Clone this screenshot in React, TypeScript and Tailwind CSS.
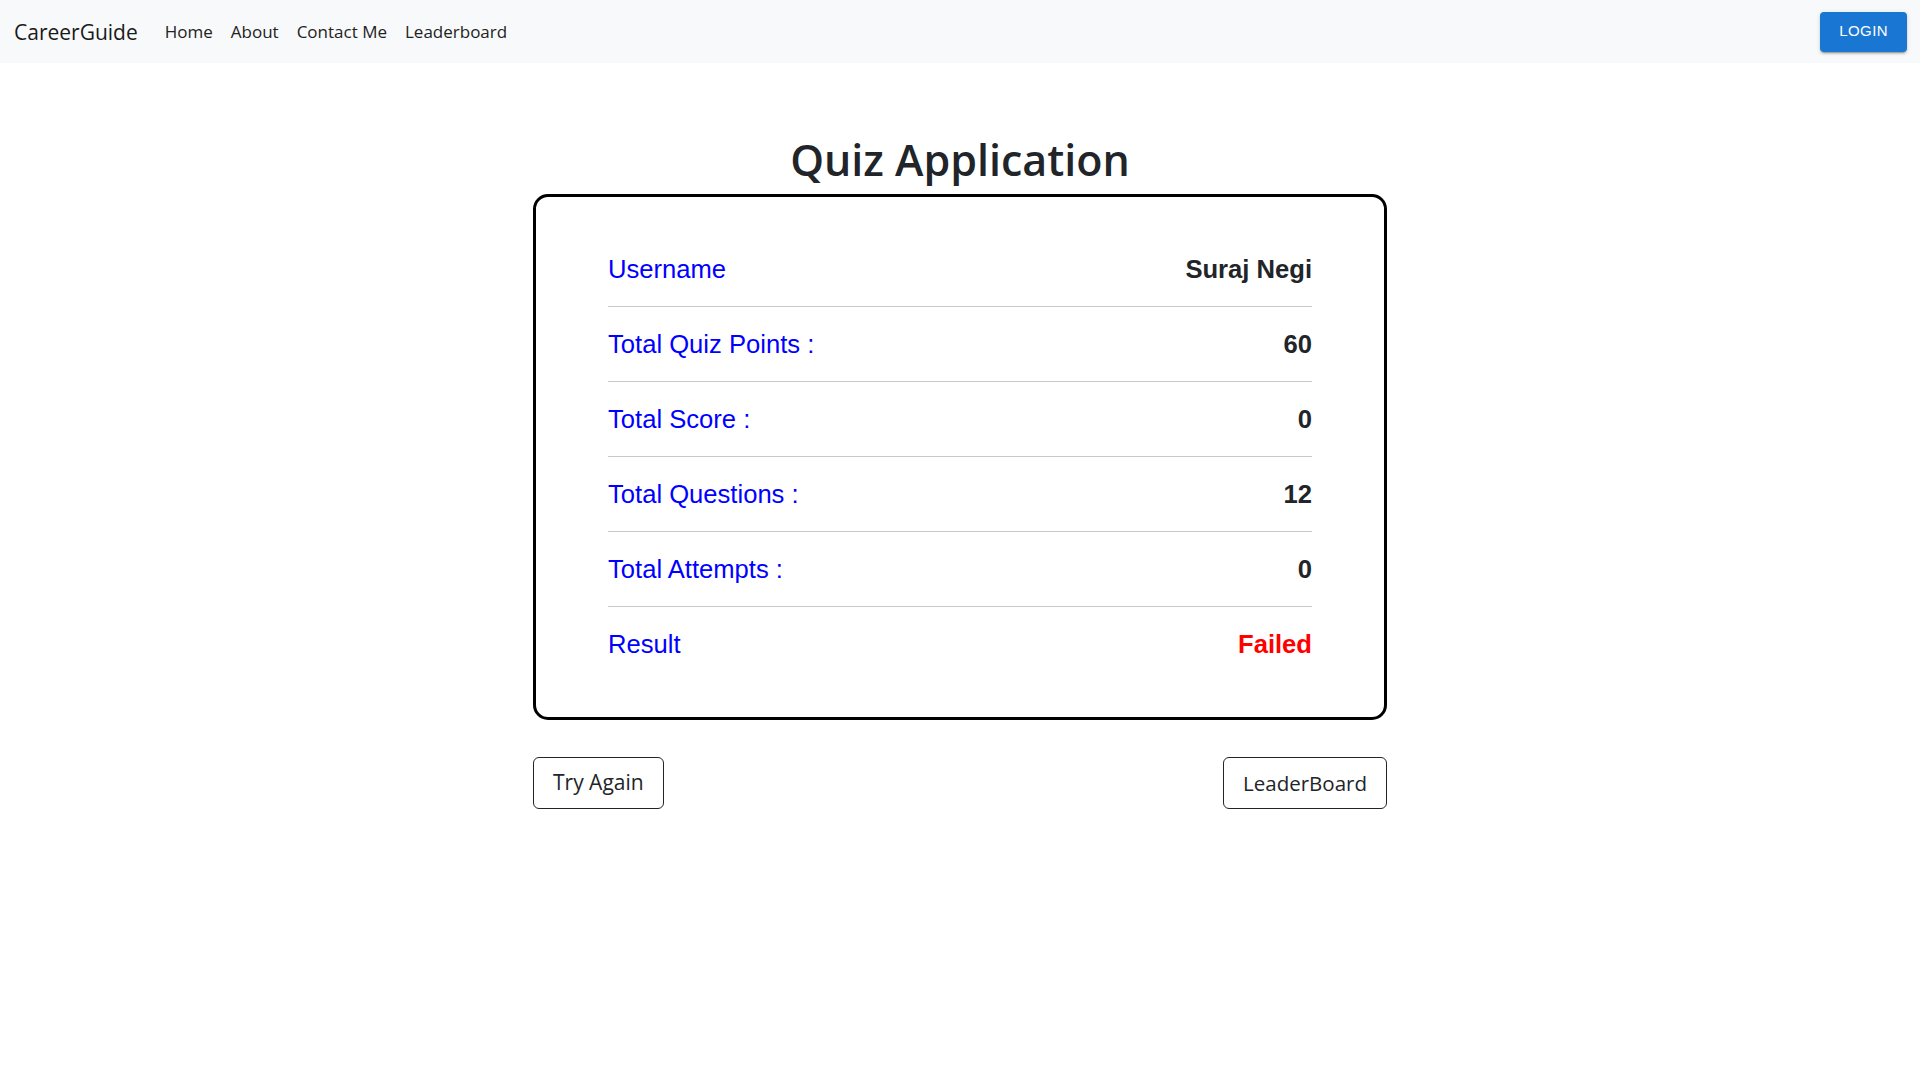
import React from 'react';

const rows = [
  { label: 'Username', value: 'Suraj Negi' },
  { label: 'Total Quiz Points :', value: '60' },
  { label: 'Total Score :', value: '0' },
  { label: 'Total Questions :', value: '12' },
  { label: 'Total Attempts :', value: '0' },
  { label: 'Result', value: 'Failed', failed: true },
];

function Navbar() {
  return (
    <nav className="h-[63px] bg-[#f8f9fa] flex items-center justify-between pl-[14px] pr-[13px] font-['Open_Sans',sans-serif]">
      <div className="flex items-center">
        <a className="text-[21px] leading-[30px] text-[#1a1a1a] mr-[27px]">CareerGuide</a>
        <div className="flex items-center gap-[18px] text-[17px] text-[#222]">
          <a>Home</a>
          <a>About</a>
          <a>Contact Me</a>
          <a>Leaderboard</a>
        </div>
      </div>
      <button className="h-[40px] px-[19px] rounded-[4px] bg-[#1976d2] text-white text-[15px] tracking-[0.4px] font-['Liberation_Sans',Arial,sans-serif] shadow-[0px_3px_1px_-2px_rgba(0,0,0,0.2),0px_2px_2px_0px_rgba(0,0,0,0.14),0px_1px_5px_0px_rgba(0,0,0,0.12)]">
        LOGIN
      </button>
    </nav>
  );
}

export default function App() {
  return (
    <div className="min-h-screen bg-white">
      <Navbar />
      <main className="w-[854px] mx-auto">
        <h1 className="mt-[71px] mb-[8px] text-center text-[43px] leading-[52px] font-semibold text-[#212529] font-['Open_Sans',sans-serif]">
          Quiz Application
        </h1>
        <div className="border-[3px] border-black rounded-[15px] px-[72px] pt-[35px] pb-[36px] font-['Liberation_Sans',Arial,sans-serif]">
          {rows.map((r, i) => (
            <div
              key={r.label}
              className={`flex justify-between items-center pt-[23px] pb-[22px] leading-[29px] text-[25.6px] ${
                i < rows.length - 1 ? 'border-b border-[#c8c9ca]' : ''
              }`}
            >
              <span className="text-[#0000ff]">{r.label}</span>
              <span className={r.failed ? 'font-bold text-[#ff0000]' : 'font-bold text-[#212529]'}>{r.value}</span>
            </div>
          ))}
        </div>
        <div className="flex justify-between mt-[37px] font-['Open_Sans',sans-serif]">
          <button className="h-[52px] px-[19px] border border-[#212529] rounded-[6px] text-[21px] text-[#212529] bg-white">
            Try Again
          </button>
          <button className="h-[52px] px-[19px] border border-[#212529] rounded-[6px] text-[20.5px] text-[#212529] bg-white">
            LeaderBoard
          </button>
        </div>
      </main>
    </div>
  );
}
